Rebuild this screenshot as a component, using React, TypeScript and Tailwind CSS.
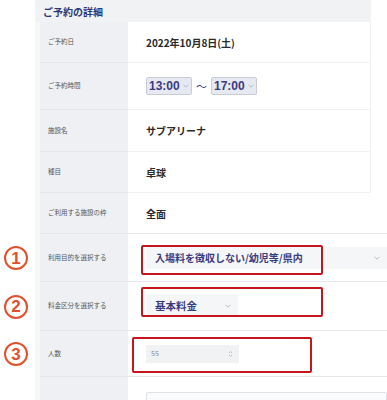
import React from "react";

const F = "font-['Noto_Sans_CJK_JP','Noto_Sans',sans-serif]";

function Chevron({ className = "" }: { className?: string }) {
  return (
    <svg className={className} width="6" height="4" viewBox="0 0 6 4" fill="none">
      <path d="M0.6 0.8 L3 3.2 L5.4 0.8" stroke="#a9acb6" strokeWidth="0.8" />
    </svg>
  );
}

function Row({
  label,
  h,
  children,
  wide = false,
  mark,
}: {
  label: string;
  h: string;
  children?: React.ReactNode;
  wide?: boolean;
  mark?: string;
}) {
  return (
    <div className={`flex ${h}`}>
      <div className="w-[35px] shrink-0 flex items-center justify-center pr-[3px]">
        {mark && (
          <span className="w-[24px] h-[24px] rounded-full border-[2.5px] border-[#e2502c] flex items-center justify-center text-[17px] font-bold leading-none text-[#e2502c] font-['Liberation_Sans',sans-serif]">
            {mark}
          </span>
        )}
      </div>
      <div className="w-[5px] shrink-0 bg-[#f7f7f8]" />
      <div className="w-[88px] shrink-0 bg-[#eef0f3] border-b border-[#e4e6ea] flex items-center pl-[8px] text-[6.5px] text-[#555]">
        {label}
      </div>
      <div
        className={`${wide ? "flex-1" : "w-[243px] border-r border-[#f1f1f3]"} relative border-b border-[#e6e7ea] flex items-center pl-[18px] bg-white`}
      >
        {children}
      </div>
    </div>
  );
}

function TimeSelect({ value }: { value: string }) {
  return (
    <div className="w-[46px] h-[18px] bg-[#e6e8f2] border border-[#c9ccd6] rounded-[2px] flex items-center pl-[2px] gap-[3px]">
      <span className="text-[12px] font-bold text-[#3b3b80] font-['Liberation_Sans',sans-serif] leading-none">
        {value}
      </span>
      <Chevron />
    </div>
  );
}

export default function App() {
  return (
    <div className={`w-[387px] h-[400px] overflow-hidden bg-white ${F}`}>
      <div className="ml-[35px] w-[336px] h-[22px] bg-[#f1f2f4] flex items-center pl-[8px]">
        <span className="text-[10px] font-bold text-[#2d3877]">ご予約の詳細</span>
      </div>

      <Row label="ご予約日" h="h-[41px]">
        <span className="text-[10px] font-bold text-[#2a2a2a]">2022年10月8日(土)</span>
      </Row>

      <Row label="ご予約時間" h="h-[47px]">
        <div className="flex items-center">
          <TimeSelect value="13:00" />
          <span className="mx-[4px] text-[11px] text-[#3b3b80] leading-none">〜</span>
          <TimeSelect value="17:00" />
        </div>
      </Row>

      <Row label="施設名" h="h-[42px]">
        <span className="text-[10px] font-bold text-[#2a2a2a]">サブアリーナ</span>
      </Row>

      <Row label="種目" h="h-[41px]">
        <span className="text-[10px] font-bold text-[#2a2a2a]">卓球</span>
      </Row>

      <Row label="ご利用する施設の枠" h="h-[41px]" wide>
        <span className="text-[10px] font-bold text-[#2a2a2a]">全面</span>
      </Row>

      <Row label="利用目的を選択する" h="h-[48px]" wide mark="1">
        <div className="flex-1 h-[22px] bg-[#f5f6f8] flex items-center pl-[9px] pr-[7px] justify-between">
          <span className="text-[10px] font-bold text-[#3b3b80]">入場料を徴収しない/幼児等/県内</span>
          <Chevron />
        </div>
        <div className="absolute left-[13px] top-[11px] w-[182px] h-[30px] border-2 border-[#c4161c] rounded-[2px]" />
      </Row>

      <Row label="料金区分を選択する" h="h-[49px]" wide mark="2">
        <div className="w-[92px] h-[22px] bg-[#f5f6f8] flex items-center pl-[9px] pr-[7px] justify-between">
          <span className="text-[10.5px] font-bold text-[#3b3b80]">基本料金</span>
          <Chevron />
        </div>
        <div className="absolute left-[13px] top-[5px] w-[182px] h-[30px] border-2 border-[#c4161c] rounded-[2px]" />
      </Row>

      <Row label="人数" h="h-[46px]" wide mark="3">
        <div className="w-[93px] h-[18px] bg-[#f1f2f4] flex items-center pl-[5px] pr-[6px] justify-between">
          <span className="text-[7px] text-[#888]">55</span>
          <svg width="5" height="8" viewBox="0 0 5 8" fill="none">
            <path d="M1 3 L2.5 1.5 L4 3" stroke="#aaa" strokeWidth="0.7" />
            <path d="M1 5 L2.5 6.5 L4 5" stroke="#aaa" strokeWidth="0.7" />
          </svg>
        </div>
        <div className="absolute left-[4px] top-[6px] w-[180px] h-[36px] border-2 border-[#c4161c] rounded-[2px]" />
      </Row>

      <div className="flex h-[60px]">
        <div className="w-[35px] shrink-0" />
        <div className="w-[5px] shrink-0 bg-[#f7f7f8]" />
        <div className="w-[88px] shrink-0 bg-[#eef0f3]" />
        <div className="flex-1 pl-[18px] pt-[15px]">
          <div className="h-[40px] border border-[#dfe1e6] bg-[#fafbfc] rounded-[2px]" />
        </div>
      </div>
    </div>
  );
}
